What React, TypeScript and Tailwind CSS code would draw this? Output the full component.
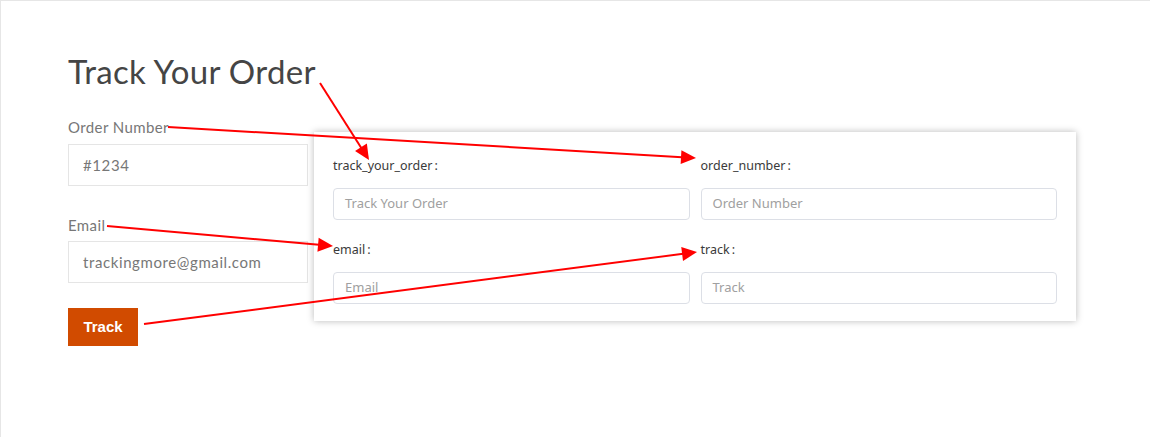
import React from 'react';

type Arrow = { x1: number; y1: number; x2: number; y2: number };

const arrows: Arrow[] = [
  { x1: 320, y1: 83, x2: 369, y2: 160 },
  { x1: 168, y1: 127, x2: 696, y2: 158 },
  { x1: 107, y1: 226, x2: 333, y2: 246 },
  { x1: 144, y1: 324, x2: 697, y2: 252 },
];

const ArrowShape: React.FC<Arrow> = ({ x1, y1, x2, y2 }) => {
  const len = Math.hypot(x2 - x1, y2 - y1);
  const ux = (x2 - x1) / len;
  const uy = (y2 - y1) / len;
  const head = 15;
  const half = 7;
  const bx = x2 - ux * head;
  const by = y2 - uy * head;
  const pts = [
    `${x2},${y2}`,
    `${bx - uy * half},${by + ux * half}`,
    `${bx + uy * half},${by - ux * half}`,
  ].join(' ');
  return (
    <g>
      <line x1={x1} y1={y1} x2={bx + ux} y2={by + uy} stroke="#ff0000" strokeWidth={2} />
      <polygon points={pts} fill="#ff0000" />
    </g>
  );
};

const fields = [
  { label: 'track_your_order', placeholder: 'Track Your Order' },
  { label: 'order_number', placeholder: 'Order Number' },
  { label: 'email', placeholder: 'Email' },
  { label: 'track', placeholder: 'Track' },
];

export default function App() {
  return (
    <div className="relative w-[1150px] h-[437px] overflow-hidden bg-white border-t border-l border-[#e6e6e6] font-['Lato',sans-serif]">
      {/* Tracking form */}
      <div className="pl-[67px] pt-[50px]">
        <h1 className="text-[33px] leading-[40px] text-[#454545] font-normal tracking-[0.3px]">Track Your Order</h1>

        <div className="mt-[26px] text-[15px] leading-[20px] text-[#777] tracking-[0.4px]">Order Number</div>
        <div className="mt-[7px] w-[240px] h-[42px] border border-[#e5e5e5] flex items-center pl-[14px] text-[15px] text-[#777] tracking-[0.6px]">
          #1234
        </div>

        <div className="mt-[29px] text-[15px] leading-[20px] text-[#777] tracking-[0.4px]">Email</div>
        <div className="mt-[6px] w-[240px] h-[42px] border border-[#e5e5e5] flex items-center pl-[14px] text-[15px] text-[#777] tracking-[0.6px]">
          trackingmore@gmail.com
        </div>

        <button className="mt-[25px] w-[70px] h-[38px] bg-[#d14b00] text-white text-[15px] font-bold font-['Liberation_Sans',sans-serif]">
          Track
        </button>
      </div>

      {/* Translation popover */}
      <div className="absolute left-[313px] top-[131px] w-[762px] bg-white shadow-[0_0_7px_rgba(0,0,0,0.28)] pt-[25px] pb-[17px] px-[19px] font-['Noto_Sans',sans-serif]">
        <div className="grid grid-cols-2 gap-x-[11px] gap-y-[21px]">
          {fields.map((f) => (
            <div key={f.label}>
              <div className="text-[12.5px] leading-[18px] text-[#3a3a3a]">
                {f.label}
                <span className="ml-[2px]">:</span>
              </div>
              <div className="mt-[13px] h-[32px] border border-[#dcdfe6] rounded-[4px] flex items-center pl-[11px] text-[13px] text-[#a0a0a0]">
                {f.placeholder}
              </div>
            </div>
          ))}
        </div>
      </div>

      {/* Annotation arrows */}
      <svg className="absolute -left-px -top-px pointer-events-none" width={1150} height={437} viewBox="0 0 1150 437">
        {arrows.map((a, i) => (
          <ArrowShape key={i} {...a} />
        ))}
      </svg>
    </div>
  );
}
